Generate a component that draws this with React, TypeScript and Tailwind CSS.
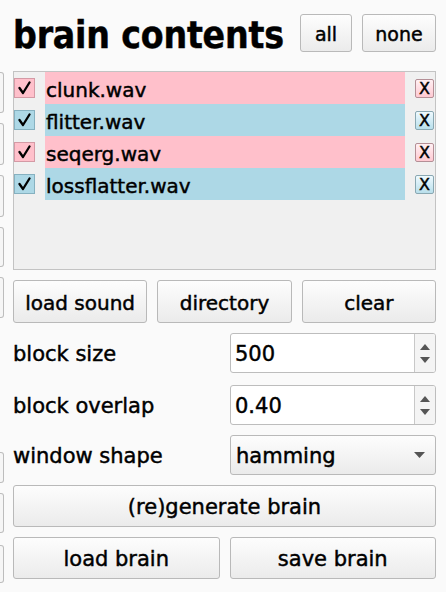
import React from 'react';

const files = [
  { name: 'clunk.wav',       tone: 'pink' },
  { name: 'flitter.wav',     tone: 'blue' },
  { name: 'seqerg.wav',      tone: 'pink' },
  { name: 'lossflatter.wav', tone: 'blue' },
];

// bits of the neighbouring panel peeking in at the left edge
const edgeBoxes = [
  { mt: 'mt-[72px]', h: 'h-[41px]' },
  { mt: 'mt-[10px]', h: 'h-[42px]' },
  { mt: 'mt-[10px]', h: 'h-[42px]' },
  { mt: 'mt-[10px]', h: 'h-[40px]' },
  { mt: 'mt-[10px]', h: 'h-[41px]' },
  { mt: 'mt-[134px]', h: 'h-[31px]' },
  { mt: 'mt-[10px]', h: 'h-[40px]' },
  { mt: 'mt-[12px]', h: 'h-[38px]' },
];

const btn =
  'flex items-center justify-center rounded-[3px] border border-[#b9b9b9] bg-gradient-to-b from-[#fdfdfd] to-[#ebebeb] text-black';

function Check({ tone }: { tone: string }) {
  const box = tone === 'pink'
    ? 'bg-[#ffc0cb] border-[#d49aa5]'
    : 'bg-[#add8e6] border-[#86b1c0]';
  return (
    <div className={`w-[21px] h-[20px] border flex items-center justify-center ${box}`}>
      <svg width="15" height="14" viewBox="0 0 15 14">
        <path d="M2.5 7 L6 12 L12.5 1.5" fill="none" stroke="#000" strokeWidth="2.3" strokeLinecap="round" strokeLinejoin="round" />
      </svg>
    </div>
  );
}

function RemoveBtn({ tone }: { tone: string }) {
  const tint = tone === 'pink'
    ? 'from-[#fff0f3] to-[#ffc9d2] border-[#b48f96]'
    : 'from-[#effaff] to-[#b9dfeb] border-[#8aa8b2]';
  return (
    <div className={`w-[19px] h-[19px] rounded-[2px] border bg-gradient-to-b flex items-center justify-center text-[16px] leading-none pt-[1px] ${tint}`}>
      X
    </div>
  );
}

function Arrows() {
  return (
    <div className="w-[21px] self-stretch border-l border-[#c8c8c8] bg-[#f4f4f4] flex flex-col items-center justify-center gap-[7px]">
      <svg width="10" height="6" viewBox="0 0 10 6"><path d="M0 6 L5 0 L10 6 Z" fill="#555" /></svg>
      <svg width="10" height="6" viewBox="0 0 10 6"><path d="M0 0 L5 6 L10 0 Z" fill="#555" /></svg>
    </div>
  );
}

export default function App() {
  return (
    <div
      className="w-[446px] h-[592px] bg-[#fafafa] flex text-black overflow-hidden [-webkit-text-stroke:0.45px_black]"
      style={{ fontFamily: '"DejaVu Sans", sans-serif' }}
    >
      <div className="w-[4px] flex flex-col [-webkit-text-stroke:0]">
        {edgeBoxes.map((b, i) => (
          <div key={i} className={`${b.mt} ${b.h} rounded-r-[3px] border border-l-0 border-[#bdbdbd] bg-[#f6f6f6]`} />
        ))}
      </div>

      <div className="flex-1 pl-[9px] pr-[10px] pt-[14px] flex flex-col">
        {/* title row */}
        <div className="flex items-center h-[38px]">
          <h1 className="flex-1 whitespace-nowrap font-bold font-stretch-condensed text-[37px] leading-none tracking-[-0.2px] mt-[4px]">brain contents</h1>
          <button className={`${btn} w-[52px] h-[38px] text-[19px] pt-[2px]`}>all</button>
          <button className={`${btn} w-[74px] h-[38px] text-[19px] pt-[2px] ml-[10px]`}>none</button>
        </div>

        {/* file list */}
        <div className="mt-[19px] h-[199px] border border-[#c3c3c3] bg-[#f0f0f0] flex flex-col">
          {files.map((f) => (
            <div key={f.name} className="h-[32px] flex items-center">
              <Check tone={f.tone} />
              <div className={`ml-[10px] w-[360px] h-full flex items-center text-[20px] pl-[1px] pt-[3px] ${f.tone === 'pink' ? 'bg-[#ffc0cb]' : 'bg-[#add8e6]'}`}>
                {f.name}
              </div>
              <div className="ml-[10px]">
                <RemoveBtn tone={f.tone} />
              </div>
            </div>
          ))}
        </div>

        {/* sound buttons */}
        <div className="mt-[10px] grid grid-cols-3 gap-[10px]">
          <button className={`${btn} h-[43px] text-[20px] pt-[3px]`}>load sound</button>
          <button className={`${btn} h-[43px] text-[20px] pt-[3px]`}>directory</button>
          <button className={`${btn} h-[43px] text-[20px] pt-[3px]`}>clear</button>
        </div>

        {/* parameters */}
        <div className="mt-[10px] flex items-center h-[40px]">
          <span className="flex-1 text-[21px] pt-[3px]">block size</span>
          <div className="w-[206px] h-full rounded-[3px] border border-[#bdbdbd] bg-white flex overflow-hidden">
            <span className="flex-1 pl-[4px] flex items-center text-[21px] pt-[3px]">500</span>
            <Arrows />
          </div>
        </div>
        <div className="mt-[12px] flex items-center h-[40px]">
          <span className="flex-1 text-[21px] pt-[3px]">block overlap</span>
          <div className="w-[206px] h-full rounded-[3px] border border-[#bdbdbd] bg-white flex overflow-hidden">
            <span className="flex-1 pl-[4px] flex items-center text-[21px] pt-[3px]">0.40</span>
            <Arrows />
          </div>
        </div>
        <div className="mt-[10px] flex items-center h-[40px]">
          <span className="flex-1 text-[21px] pt-[3px]">window shape</span>
          <div className={`${btn} w-[206px] h-full !justify-between pl-[5px] pr-[10px]`}>
            <span className="text-[21px] pt-[3px]">hamming</span>
            <svg width="11" height="6" viewBox="0 0 11 6"><path d="M0 0 L5.5 6 L11 0 Z" fill="#555" /></svg>
          </div>
        </div>

        <button className={`${btn} mt-[10px] h-[42px] text-[21px] pt-[3px]`}>(re)generate brain</button>

        <div className="mt-[10px] grid grid-cols-2 gap-[10px]">
          <button className={`${btn} h-[42px] text-[21px] pt-[3px]`}>load brain</button>
          <button className={`${btn} h-[42px] text-[21px] pt-[3px]`}>save brain</button>
        </div>
      </div>
    </div>
  );
}
